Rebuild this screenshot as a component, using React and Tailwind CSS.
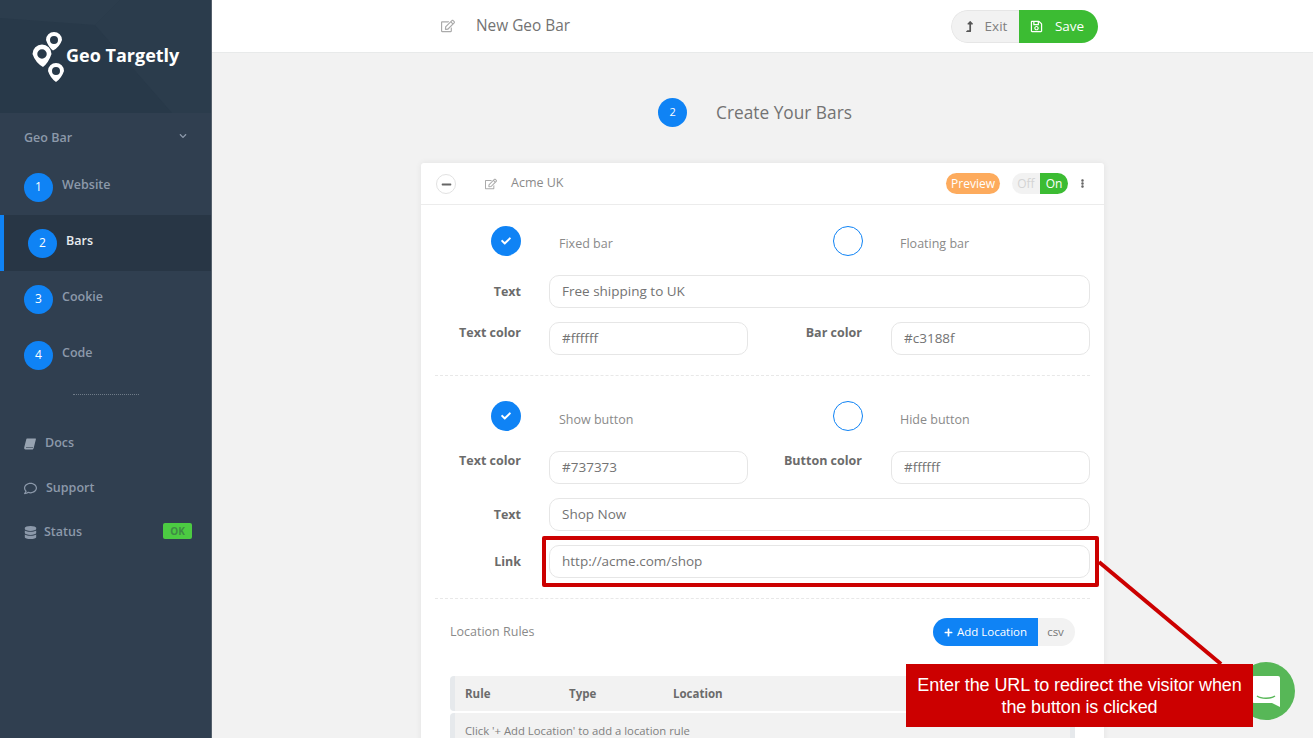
import {
  FaCheck,
  FaChevronDown,
  FaDatabase,
  FaEllipsisV,
  FaLevelUpAlt,
  FaMinus,
  FaPlus,
  FaRegComment,
  FaRegEdit,
  FaRegSave,
} from "react-icons/fa";

const steps = [
  { num: 1, name: "Website" },
  { num: 2, name: "Bars", active: true },
  { num: 3, name: "Cookie" },
  { num: 4, name: "Code" },
];

// teardrop with a round hole, the tip can lean a bit to one side
function pinPath(cx, cy, r, tx, ty) {
  const hole = r * 0.5;
  return (
    `M${cx - r} ${cy}A${r} ${r} 0 1 1 ${cx + r} ${cy}` +
    `Q${cx + r * 0.7} ${cy + r * 0.9} ${tx} ${ty}Q${cx - r * 0.7} ${cy + r * 0.9} ${cx - r} ${cy}Z` +
    `M${cx - hole} ${cy}A${hole} ${hole} 0 1 0 ${cx + hole} ${cy}A${hole} ${hole} 0 1 0 ${cx - hole} ${cy}Z`
  );
}

function Logo() {
  return (
    <svg width="34" height="50" viewBox="0 0 34 50" className="shrink-0">
      <path fillRule="evenodd" fill="#fff" d={pinPath(22, 8, 8, 21, 18.500)} />
      <path fillRule="evenodd" fill="#fff" d={pinPath(10, 22, 9.500, 11, 35)} />
      <path fillRule="evenodd" fill="#fff" d={pinPath(24, 39, 8, 24, 50)} />
    </svg>
  );
}

function BookIcon() {
  return (
    <svg width="12" height="12" viewBox="0 0 12 12" className="shrink-0">
      <path d="M3 .500h8.500c.400 0 .500.300.400.700L9.700 10c-.2.800-.7 1.500-1.500 1.500H1.500C.5 11.500 0 10.500.200 9.500L2.300 1.200C2.400.800 2.600.500 3 .500z" fill="#97a3b1" />
      <path d="M2 9.500h7" stroke="#303f50" strokeWidth=".6" />
    </svg>
  );
}

function Sidebar() {
  return (
    <aside className="w-[212px] shrink-0 h-full bg-[#303f50] border-r border-[#55606c]">
      <div className="relative h-[113px] bg-[#283949] overflow-hidden flex items-center pl-[32px]">
        <svg className="absolute inset-0" width="212" height="113" viewBox="0 0 212 113">
          <path d="M95 25 L120 0 L212 0 L212 113 L172 113 Z" fill="#2b3c4c" />
          <path d="M0 0 L120 0 L95 25 L0 18 Z" fill="#2c3d4d" />
        </svg>
        <div className="relative flex items-center">
          <Logo />
          <span className="text-white font-bold text-[18px] mb-[2px]">Geo Targetly</span>
        </div>
      </div>

      <div className="h-[46px] pl-[24px] pr-[24px] flex items-center justify-between text-[#8c99aa] text-[12.500px] font-semibold">
        <span className="mt-[4px]">Geo Bar</span>
        <FaChevronDown className="text-[8px]" />
      </div>

      {steps.map((s) => (
        <div
          key={s.num}
          className={`h-[56px] flex items-center gap-[10px] ${
            s.active ? "bg-[#283645] border-l-4 border-[#0f83f5] pl-[24px] text-[#e8ecf0]" : "pl-[24px] text-[#8c99aa]"
          } text-[12.500px] font-semibold`}
        >
          <span className="w-[29px] h-[29px] rounded-full bg-[#0f83f5] text-white text-[12px] font-normal flex items-center justify-center">
            {s.num}
          </span>
          <span className="mb-[3px] ml-[-1px]">{s.name}</span>
        </div>
      ))}

      <div className="ml-[73px] w-[66px] mt-[11px] border-t border-dotted border-[#6f7b88]" />

      <div className="mt-[26px] pl-[24px] pr-[19px] text-[#8c99aa] text-[12.500px] font-semibold">
        <div className="h-[45px] flex items-center gap-[9px]">
          <BookIcon />
          <span>Docs</span>
        </div>
        <div className="h-[44px] flex items-center gap-[9px]">
          <FaRegComment className="text-[13px]" />
          <span>Support</span>
        </div>
        <div className="h-[44px] flex items-center gap-[7px]">
          <FaDatabase className="text-[13px]" />
          <span className="flex-1">Status</span>
          <span className="w-[29px] h-[16px] mb-[2px] rounded-[2px] bg-[#4ccb42] text-[#3f8a45] text-[10px] font-bold flex items-center justify-center">
            OK
          </span>
        </div>
      </div>
    </aside>
  );
}

function Field({ value, className = "" }) {
  return (
    <input
      readOnly
      value={value}
      className={`h-[33px] rounded-[10px] border border-[#e6e6e6] bg-white px-[12px] pb-[2px] text-[13.500px] text-[#737373] outline-none ${className}`}
    />
  );
}

function Label({ children, className = "" }) {
  return <span className={`text-[12.500px] font-bold text-right text-[#6b6b6b] ${className}`}>{children}</span>;
}

function Radio({ checked }) {
  return checked ? (
    <span className="w-[30px] h-[30px] rounded-full bg-[#0f83f5] text-white flex items-center justify-center">
      <FaCheck className="text-[10px]" />
    </span>
  ) : (
    <span className="w-[30px] h-[30px] rounded-full border border-[#0f83f5] bg-white" />
  );
}

function RadioRow({ left, right, labelTop = "mt-[7px]" }) {
  return (
    <div className="flex items-center h-[30px] text-[12.500px] text-[#8a8a8a]">
      <span className="ml-[70px]">
        <Radio checked />
      </span>
      <span className={`ml-[38px] w-[274px] ${labelTop}`}>{left}</span>
      <Radio />
      <span className={`ml-[37px] ${labelTop}`}>{right}</span>
    </div>
  );
}

function TwoFields({ label1, value1, label2, value2, labelTop = "mt-[1px]" }) {
  return (
    <div className="flex items-start">
      <Label className={`w-[100px] ${labelTop}`}>{label1}</Label>
      <Field value={value1} className="ml-[28px] w-[199px]" />
      <Label className={`w-[114px] ${labelTop}`}>{label2}</Label>
      <Field value={value2} className="ml-[29px] w-[199px]" />
    </div>
  );
}

function WideField({ label, value }) {
  return (
    <div className="flex items-center">
      <Label className="w-[100px] mt-[2px]">{label}</Label>
      <Field value={value} className="ml-[28px] w-[541px]" />
    </div>
  );
}

function Card() {
  return (
    <div className="mx-auto mt-[36px] w-[683px] bg-white rounded-t-[3px] shadow-[0_0_6px_rgba(0,0,0,0.07)] pb-[40px]">
      <div className="h-[42px] border-b border-[#ececec] flex items-center pl-[15px] pr-[17px]">
        <span className="w-[20px] h-[20px] rounded-full border border-[#e2e2e2] flex items-center justify-center text-[#666] mt-[1px]">
          <FaMinus className="text-[11px]" />
        </span>
        <FaRegEdit className="ml-[29px] text-[12px] text-[#aaaaaa]" />
        <span className="ml-[14px] text-[12.500px] text-[#8a8a8a]">Acme UK</span>
        <span className="ml-auto h-[21px] w-[54px] rounded-full bg-[#fdab5d] text-white text-[12px] flex items-center justify-center">
          Preview
        </span>
        <span className="ml-[12px] h-[21px] w-[56px] rounded-full overflow-hidden flex text-[12px] bg-[#f2f2f2]">
          <span className="flex-1 text-[#d4d4d4] flex items-center justify-center">Off</span>
          <span className="w-[28px] bg-[#3cbc33] text-white flex items-center justify-center">On</span>
        </span>
        <FaEllipsisV className="ml-[10px] text-[9px] text-[#666]" />
      </div>

      <div className="pt-[21px]">
        <RadioRow left="Fixed bar" right="Floating bar" />
        <div className="mt-[19px]">
          <WideField label="Text" value="Free shipping to UK" />
        </div>
        <div className="mt-[14px]">
          <TwoFields label1="Text color" value1="#ffffff" label2="Bar color" value2="#c3188f" labelTop="mt-[2px]" />
        </div>
        <div className="mt-[20px] mx-[14px] border-t border-dashed border-[#e8e8e8]" />
        <div className="mt-[25px]">
          <RadioRow left="Show button" right="Hide button" labelTop="mt-[9px]" />
        </div>
        <div className="mt-[20px]">
          <TwoFields label1="Text color" value1="#737373" label2="Button color" value2="#ffffff" />
        </div>
        <div className="mt-[14px]">
          <WideField label="Text" value="Shop Now" />
        </div>
        <div className="mt-[14px]">
          <WideField label="Link" value="http://acme.com/shop" />
        </div>
        <div className="mt-[20px] mx-[14px] border-t border-dashed border-[#e8e8e8]" />

        <div className="mt-[19px] pl-[29px] pr-[29px] flex items-center justify-between">
          <span className="text-[12.500px] text-[#8a8a8a]">Location Rules</span>
          <div className="flex h-[28px] rounded-full overflow-hidden text-[11.500px]">
            <span className="w-[105px] bg-[#0f83f5] text-white flex items-center justify-center gap-[4px]">
              <FaPlus className="text-[9px]" />
              Add Location
            </span>
            <span className="w-[37px] bg-[#f2f2f2] text-[#777] flex items-center justify-center pr-[2px]">csv</span>
          </div>
        </div>

        <div className="mt-[30px] mx-[29px] text-[11.500px] text-[#6b6b6b]">
          <div className="h-[35px] bg-[#f2f2f2] rounded-l-[4px] border-l-[5px] border-[#e6e9ec] flex items-center pl-[10px] font-bold">
            <span className="w-[104px]">Rule</span>
            <span className="w-[104px]">Type</span>
            <span>Location</span>
          </div>
          <div className="mt-[2px] h-[35px] bg-[#f2f2f2] rounded-l-[4px] border-x-[5px] border-[#e6e9ec] flex items-center pl-[10px] pt-[2px] text-[11.300px] text-[#808080]">
            Click '+ Add Location' to add a location rule
          </div>
        </div>
      </div>
    </div>
  );
}

function Annotation() {
  return (
    <>
      <div className="absolute left-[1237px] top-[662px] w-[58px] h-[58px] rounded-full bg-[#57b757] flex items-center justify-center">
        <svg width="32" height="32" viewBox="0 0 32 32">
          <path d="M4 1h24a2 2 0 0 1 2 2v29l-8-4H4a2 2 0 0 1-2-2V3a2 2 0 0 1 2-2z" fill="#fff" />
          <path d="M7 21c4 3 14 3 18 0" fill="none" stroke="#57b757" strokeWidth="1.500" />
        </svg>
      </div>
      <div className="absolute left-[542px] top-[536px] w-[557px] h-[51px] border-4 border-[#cc0000] rounded-[2px]" />
      <svg className="absolute left-[1095px] top-[558px]" width="135" height="110" viewBox="0 0 135 110">
        <line x1="4" y1="4" x2="126" y2="106" stroke="#cc0000" strokeWidth="4" />
      </svg>
      <div className="absolute left-[906px] top-[664px] w-[347px] h-[63px] bg-[#cc0000] text-white text-[18px] leading-[22px] text-center flex items-center justify-center font-['Liberation_Sans',Arial,sans-serif] tracking-[-0.1px]">
        <span>
          Enter the URL to redirect the visitor when
          <br />
          the button is clicked
        </span>
      </div>
    </>
  );
}

export default function App() {
  return (
    <div className="relative w-[1313px] h-[738px] overflow-hidden flex bg-[#f2f2f2] font-['Open_Sans',sans-serif]">
      <Sidebar />
      <main className="flex-1 min-w-0 h-full">
        <div className="h-[53px] bg-white border-b border-[#e8eaea]">
          <div className="mx-auto w-[683px] h-full flex items-center pl-[20px] pr-[6px]">
            <FaRegEdit className="text-[14px] text-[#aaaaaa]" />
            <span className="ml-[21px] text-[15.400px] text-[#737373]">New Geo Bar</span>
            <div className="ml-auto flex h-[33px] mt-[1px] rounded-full overflow-hidden text-[13.500px]">
              <span className="w-[68px] bg-[#f2f2f2] text-[#808080] border border-r-0 border-[#e6e6e6] rounded-l-full flex items-center justify-center gap-[10px]">
                <FaLevelUpAlt className="text-[11px] text-[#555]" />
                Exit
              </span>
              <span className="w-[79px] bg-[#3cbc33] text-white flex items-center justify-center gap-[12px] pr-[3px]">
                <FaRegSave className="text-[13px]" />
                Save
              </span>
            </div>
          </div>
        </div>

        <div className="mt-[45px] flex items-center justify-center h-[29px] pr-[15px]">
          <span className="w-[29px] h-[29px] rounded-full bg-[#0f83f5] text-white text-[11px] flex items-center justify-center">
            2
          </span>
          <span className="ml-[29px] text-[17.300px] text-[#737373]">Create Your Bars</span>
        </div>

        <Card />
      </main>
      <Annotation />
    </div>
  );
}
